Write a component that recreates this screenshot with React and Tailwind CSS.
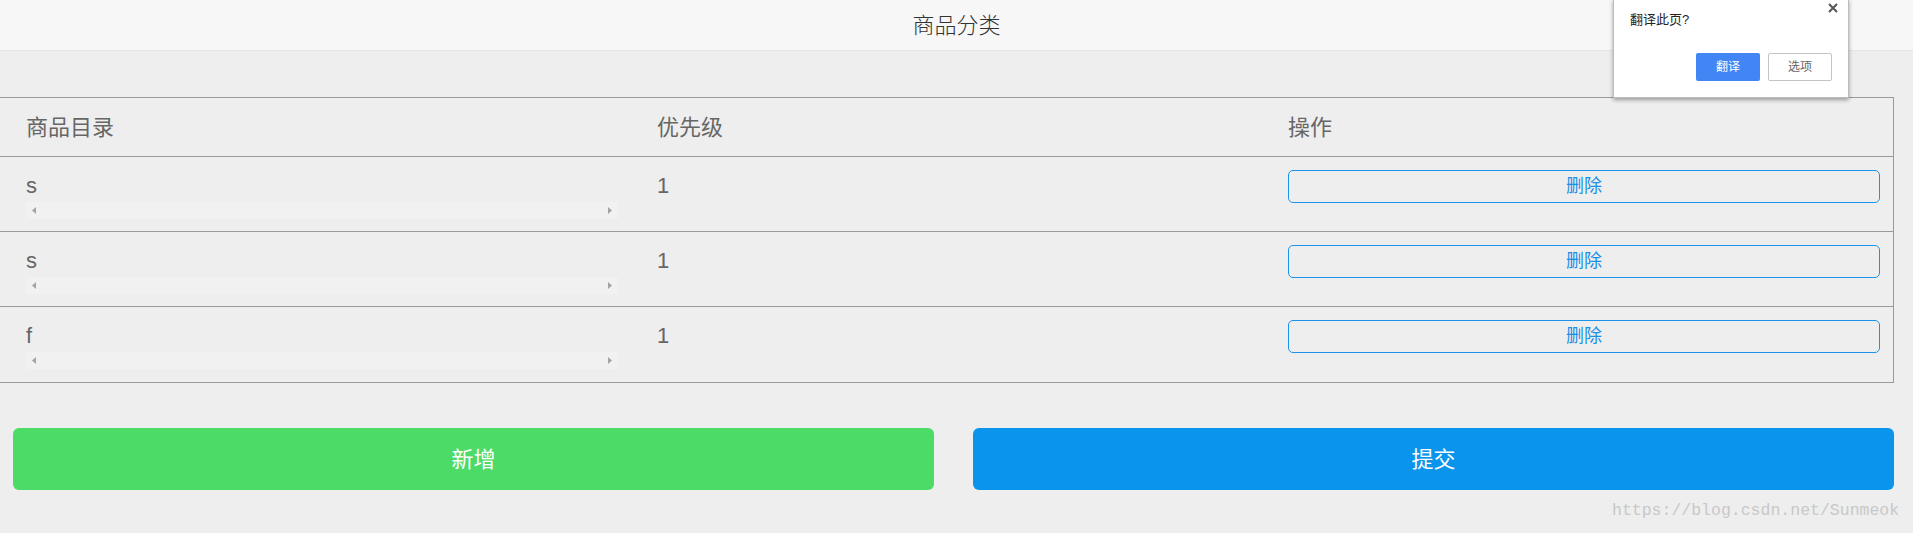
import React from 'react';

const rows = [
    { name: 's', priority: 1 },
    { name: 's', priority: 1 },
    { name: 'f', priority: 1 },
];

const FakeScrollbar = () => (
    <div className="h-[17px] w-full bg-[#f1f1f1] flex items-center justify-between px-[6px]">
        <svg width="4" height="7" viewBox="0 0 4 7"><polygon points="4,0 4,7 0,3.5" fill="#a3a3a3" /></svg>
        <svg width="4" height="7" viewBox="0 0 4 7"><polygon points="0,0 0,7 4,3.5" fill="#a3a3a3" /></svg>
    </div>
);

const App = () => {
    return (
        <div className="relative min-h-[533px] bg-[#eeeeee] font-['Liberation_Sans','Noto_Sans_CJK_SC',sans-serif] overflow-hidden">
            {/* title bar */}
            <div className="h-[51px] bg-[#f7f7f7] border-b border-[#e6e6e6] flex items-center justify-center text-[22px] font-light text-[#333]">
                商品分类
            </div>

            {/* category table */}
            <div className="mt-[46px] w-[1894px] border-t border-r border-b border-[#9a9a9a] text-[22px] text-[#666]">
                <div className="grid grid-cols-3 h-[59px] border-b border-[#9a9a9a] items-center">
                    <div className="pl-[26px]">商品目录</div>
                    <div className="pl-[26px]">优先级</div>
                    <div className="pl-[26px]">操作</div>
                </div>
                {rows.map((row, i) => (
                    <div key={i} className={`grid grid-cols-3 h-[75px] ${i < rows.length - 1 ? 'border-b border-[#9a9a9a]' : ''}`}>
                        <div className="pl-[26px] pr-[13px] pt-[13px]">
                            <div className="leading-[32px]">{row.name}</div>
                            <FakeScrollbar />
                        </div>
                        <div className="pl-[26px] pt-[13px] leading-[32px]">{row.priority}</div>
                        <div className="pl-[26px] pr-[13px] pt-[13px]">
                            <button className="w-full h-[33px] border border-[#1a94e8] rounded-[5px] text-[18px] text-[#1a8fe6] flex items-center justify-center">
                                删除
                            </button>
                        </div>
                    </div>
                ))}
            </div>

            {/* bottom actions */}
            <div className="mt-[45px] w-[1894px] pl-[13px] flex gap-[39px]">
                <button className="flex-1 h-[62px] rounded-[6px] bg-[#4cdb67] text-white text-[22px] flex items-center justify-center">新增</button>
                <button className="flex-1 h-[62px] rounded-[6px] bg-[#0a94ec] text-white text-[22px] flex items-center justify-center">提交</button>
            </div>

            {/* translate bubble */}
            <div className="absolute left-[1613px] top-[-1px] w-[236px] h-[99px] bg-white border border-[#bdbdbd] shadow-[0_2px_4px_rgba(0,0,0,0.35)] px-[16px] pt-[10px]">
                <div className="text-[13px] leading-[20px] text-[#222]">翻译此页?</div>
                <svg className="absolute right-[10px] top-[3px]" width="10" height="10" viewBox="0 0 10 10">
                    <path d="M1 1 L9 9 M9 1 L1 9" stroke="#555" strokeWidth="2" />
                </svg>
                <div className="flex justify-end gap-[8px] mt-[23px]">
                    <button className="w-[64px] h-[28px] rounded-[2px] bg-[#4285f4] text-white text-[12px]">翻译</button>
                    <button className="w-[64px] h-[28px] rounded-[2px] bg-white border border-[#c4c4c4] text-[#666] text-[12px]">选项</button>
                </div>
            </div>

            {/* watermark */}
            <div className="absolute left-[1612px] top-[501px] font-['Liberation_Mono',monospace] text-[16.5px] text-[#c8c8c8] leading-[20px]">
                https://blog.csdn.net/Sunmeok
            </div>
        </div>
    );
};

export default App;
